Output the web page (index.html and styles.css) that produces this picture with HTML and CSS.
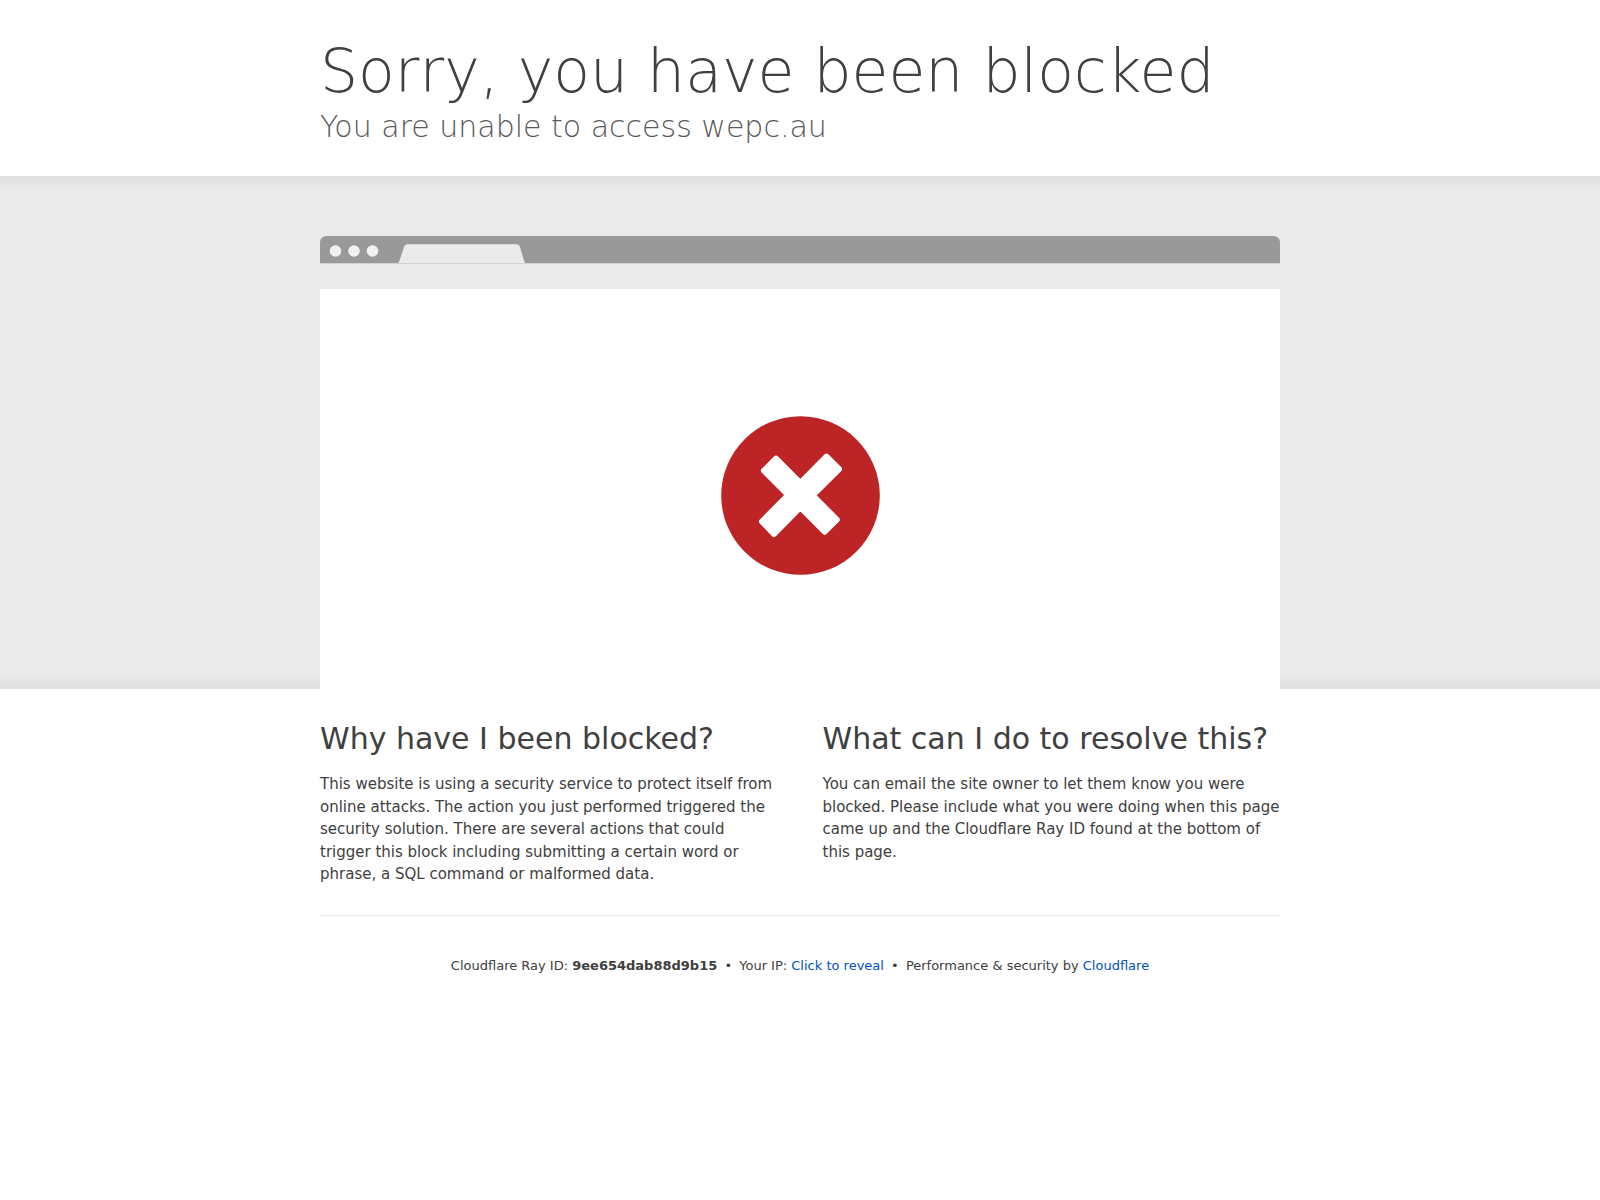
FILE: index.html
```html
<!DOCTYPE html>
<html lang="en-US">
<head>
    <meta charset="UTF-8">
    <meta name="viewport" content="width=device-width, initial-scale=1">
    <title>Attention Required! | Cloudflare</title>
    <link rel="stylesheet" href="styles.css">
</head>
<body>
    <header class="wrapper header">
        <h1>Sorry, you have been blocked</h1>
        <h2 class="subheadline">You are unable to access wepc.au</h2>
    </header>

    <section class="highlight">
        <div class="wrapper">
            <div class="browser-bar">
                <svg width="206" height="27" viewBox="0 0 206 27" aria-hidden="true">
                    <g fill="#f1f1f1">
                        <circle cx="15.5" cy="15" r="5.8"/>
                        <circle cx="34" cy="15" r="5.8"/>
                        <circle cx="52.5" cy="15" r="5.8"/>
                    </g>
                    <path fill="#ebebeb" d="M78 27Q79 26 79.500 24.500L84 11Q85 8.300 87 8.300H197Q199 8.300 200 11L204 24.500Q204.500 26 205.500 27Z"/>
                </svg>
            </div>
            <div class="screenshot">
                <svg class="error-icon" viewBox="0 0 159 159" role="img" aria-label="Blocked">
                    <circle cx="79.500" cy="79.500" r="79.300" fill="#bd2426"/>
                    <path fill="#fff" stroke="#fff" stroke-width="6" stroke-linejoin="round" d="M105.500 40.700L118 53.200L91.500 79.300L115.700 103.700L103.700 115.700L79.300 91.100L53 118L41 105.500L67.200 79L43 54.700L55 42.700L79.300 67.200Z"/>
                </svg>
            </div>
        </div>
    </section>

    <main class="wrapper">
        <div class="columns">
            <section>
                <h2>Why have I been blocked?</h2>
                <p>This website is using a security service to protect itself from online attacks. The action you just performed triggered the security solution. There are several actions that could trigger this block including submitting a certain word or phrase, a SQL command or malformed data.</p>
            </section>
            <section>
                <h2>What can I do to resolve this?</h2>
                <p>You can email the site owner to let them know you were blocked. Please include what you were doing when this page came up and the Cloudflare Ray ID found at the bottom of this page.</p>
            </section>
        </div>
    </main>

    <footer class="wrapper footer">
        <span>Cloudflare Ray ID: <strong>9ee654dab88d9b15</strong></span>
        <span class="separator">&bull;</span>
        <span>Your IP: <button type="button" class="reveal">Click to reveal</button></span>
        <span class="separator">&bull;</span>
        <span>Performance &amp; security by <a href="https://www.cloudflare.com/">Cloudflare</a></span>
    </footer>
</body>
</html>
```

FILE: styles.css
```css
* {
    box-sizing: border-box;
}

body {
    margin: 0;
    font-family: "DejaVu Sans", sans-serif;
    font-size: 15px;
    line-height: 1.5;
    color: #404040;
    background-color: #fff;
}

.wrapper {
    width: 60%;
    margin: 0 auto;
}

h1, h2, p {
    margin: 0;
}

.header {
    padding: 36px 0 29px;
}

h1 {
    font-size: 60px;
    font-weight: 200;
    line-height: 71px;
}

h2 {
    font-size: 30px;
    font-weight: 400;
    line-height: 39px;
}

.subheadline {
    font-weight: 200;
    line-height: 40px;
    color: #595959;
}

.highlight {
    padding-top: 60px;
    background-color: #ebebeb;
    background-image: linear-gradient(to bottom, #dedede, #ebebeb 3%, #ebebeb 97%, #dedede);
}

.browser-bar {
    height: 28px;
    border-bottom: 1px solid #d2d2d2;
    border-radius: 6px 6px 0 0;
    background-color: #999;
    background-clip: padding-box;
}

.browser-bar svg {
    display: block;
}

.screenshot {
    display: flex;
    justify-content: center;
    margin-top: 25px;
    padding: 127px 0 114px;
    background-color: #fff;
}

.error-icon {
    display: block;
    width: 159px;
    height: 159px;
}

.columns {
    display: grid;
    grid-template-columns: 1fr 1fr;
    gap: 45px;
    padding: 30px 0 29px;
    border-bottom: 1px solid #ebebeb;
}

.columns p {
    margin-top: 15px;
}

.footer {
    padding: 40px 0;
    text-align: center;
    font-size: 13px;
}

.separator {
    margin: 0 3px;
}

a, .reveal {
    color: #0051c3;
    text-decoration: none;
}

.reveal {
    padding: 0;
    border: 0;
    background: none;
    font: inherit;
    cursor: pointer;
}
```
